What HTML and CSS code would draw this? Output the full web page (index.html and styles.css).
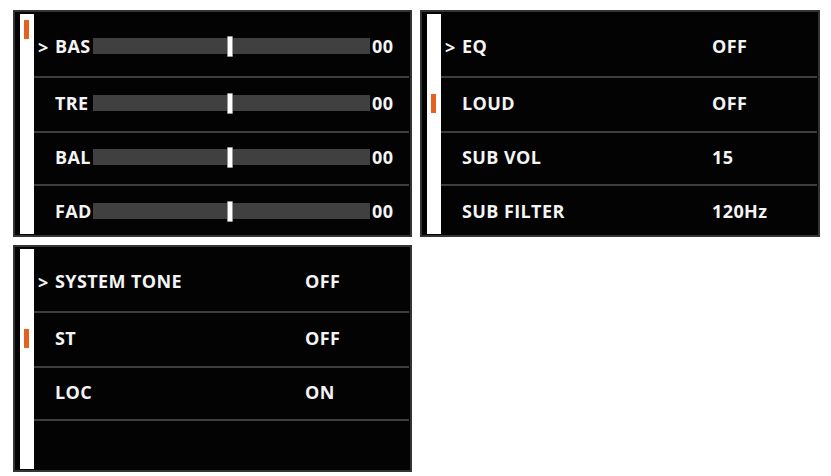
FILE: index.html
```html
<!DOCTYPE html>
<html>
<head>
<meta charset="utf-8">
<link rel="stylesheet" href="styles.css">
</head>
<body>
<div class="grid">
  <section class="panel">
    <div class="strip"><span class="mark mark-top"></span></div>
    <div class="list">
      <div class="row r1"><span class="chev">&gt;</span><span class="lbl short">BAS</span><div class="slider"><span class="thumb"></span></div><span class="num">00</span></div>
      <div class="row r2"><span class="chev"></span><span class="lbl short">TRE</span><div class="slider"><span class="thumb"></span></div><span class="num">00</span></div>
      <div class="row r3"><span class="chev"></span><span class="lbl short">BAL</span><div class="slider"><span class="thumb"></span></div><span class="num">00</span></div>
      <div class="row r4"><span class="chev"></span><span class="lbl short">FAD</span><div class="slider"><span class="thumb"></span></div><span class="num">00</span></div>
    </div>
  </section>
  <section class="panel">
    <div class="strip"><span class="mark mark-second"></span></div>
    <div class="list">
      <div class="row r1"><span class="chev">&gt;</span><span class="lbl wide">EQ</span><span class="val">OFF</span></div>
      <div class="row r2"><span class="chev"></span><span class="lbl wide">LOUD</span><span class="val">OFF</span></div>
      <div class="row r3"><span class="chev"></span><span class="lbl wide">SUB VOL</span><span class="val">15</span></div>
      <div class="row r4"><span class="chev"></span><span class="lbl wide">SUB FILTER</span><span class="val">120Hz</span></div>
    </div>
  </section>
  <section class="panel">
    <div class="strip"><span class="mark mark-second"></span></div>
    <div class="list">
      <div class="row r1"><span class="chev">&gt;</span><span class="lbl wide">SYSTEM TONE</span><span class="val">OFF</span></div>
      <div class="row r2"><span class="chev"></span><span class="lbl wide">ST</span><span class="val">OFF</span></div>
      <div class="row r3"><span class="chev"></span><span class="lbl wide">LOC</span><span class="val">ON</span></div>
      <div class="row r4"></div>
    </div>
  </section>
</div>
</body>
</html>
```
FILE: styles.css
```css
* { box-sizing: border-box; }
body {
  margin: 0;
  padding: 10px 0 0 13px;
  background: #ffffff;
  font-family: "Open Sans", "Noto Sans", "DejaVu Sans", sans-serif;
}
.grid {
  display: grid;
  grid-template-columns: 399px 400px;
  grid-template-rows: 227px 227px;
  gap: 8px;
}
.panel {
  display: flex;
  background: #030303;
  border: 2px solid #343434;
  padding: 2px 1px 1px 5px;
}
.strip {
  position: relative;
  width: 14px;
  flex: none;
  background: #ffffff;
}
.mark {
  position: absolute;
  left: 4px;
  width: 5px;
  height: 19px;
  background: #e3621f;
}
.mark-top { top: 6px; }
.mark-second { top: 80px; }
.list {
  flex: 1;
  display: flex;
  flex-direction: column;
}
.row {
  display: flex;
  align-items: center;
  padding-left: 4px;
  border-bottom: 2px solid #3e3e3e;
  color: #f4f4f4;
  font-weight: 700;
  font-size: 18px;
  line-height: 1;
  letter-spacing: 0.4px;
}
.r1 { height: 64px; padding-top: 1px; }
.r2 { height: 55px; padding-bottom: 3px; }
.r3 { height: 53px; padding-bottom: 3px; }
.r4 { flex: 1; border-bottom: none; padding-top: 1px; }
.chev {
  width: 17px;
  flex: none;
  padding-top: 2px;
}
.lbl { flex: none; }
.short { width: 38px; }
.wide { width: 250px; }
.slider {
  position: relative;
  flex: 1;
  height: 16px;
  background: #404040;
  margin-right: 2px;
}
.thumb {
  position: absolute;
  left: 134px;
  top: -2px;
  width: 6px;
  height: 21px;
  background: #ffffff;
  border: 1px solid #9a9a9a;
  border-radius: 1px;
}
.num { width: 37px; flex: none; }
```
